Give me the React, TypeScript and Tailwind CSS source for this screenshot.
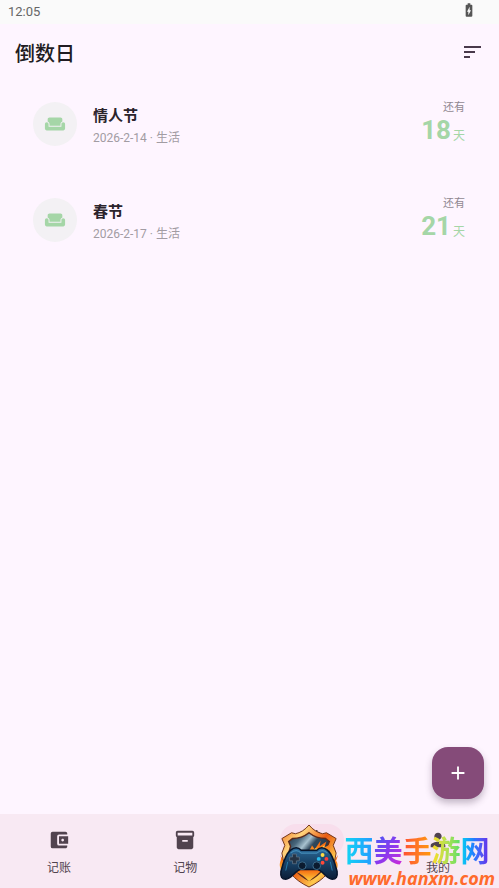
import {
  MdAccountBalanceWallet,
  MdAdd,
  MdBatteryChargingFull,
  MdEvent,
  MdInventory2,
  MdPerson,
  MdWeekend,
} from 'react-icons/md'

type CountdownProps = {
  title: string
  date: string
  category: string
  days: number
}

const countdowns: CountdownProps[] = [
  { title: '情人节', date: '2026-2-14', category: '生活', days: 18 },
  { title: '春节', date: '2026-2-17', category: '生活', days: 21 },
]

const tabs = [
  { label: '记账', icon: MdAccountBalanceWallet, active: false },
  { label: '记物', icon: MdInventory2, active: false },
  { label: '', icon: MdEvent, active: true },
  { label: '我的', icon: MdPerson, active: false },
]

const StatusBar = () => (
  <div className="flex h-6 items-center justify-between bg-[#fafafa] pl-2 pr-[22px] text-[#666666]">
    <span className="text-[13px] leading-4">12:05</span>
    <MdBatteryChargingFull className="mb-1 h-4 w-4 text-[#555555]" />
  </div>
)

const Countdown = ({ title, date, category, days }: CountdownProps) => (
  <li className="flex h-24 items-center justify-between">
    <div className="flex items-center gap-4">
      <div className="flex h-11 w-11 items-center justify-center rounded-full bg-[#f3f1f4]">
        <MdWeekend className="h-[22px] w-[22px] text-[#a5d6a7]" />
      </div>
      <div className="pt-1">
        <h2 className="text-[15px] font-bold leading-6 text-[#2b242c]">{title}</h2>
        <p className="text-[12px] leading-5 text-[#a29ca3]">
          {date} · {category}
        </p>
      </div>
    </div>
    <div className="pb-1 text-right">
      <p className="text-[11px] leading-4 text-[#908891]">还有</p>
      <p className="flex items-end justify-end leading-7 text-[#a5d6a7]">
        <span className="text-[26px] font-bold">{days}</span>
        <span className="ml-0.5 text-[12px] leading-4">天</span>
      </p>
    </div>
  </li>
)

const ShieldLogo = () => (
  <svg viewBox="0 0 64 66" className="h-16 w-[62px] shrink-0" aria-hidden="true">
    <defs>
      <linearGradient id="rim" x1="0" y1="0" x2="1" y2="1">
        <stop offset="0" stopColor="#ef6818" />
        <stop offset="0.25" stopColor="#ffd37c" />
        <stop offset="0.5" stopColor="#e95b12" />
        <stop offset="0.75" stopColor="#ffc94e" />
        <stop offset="1" stopColor="#e84b0c" />
      </linearGradient>
      <linearGradient id="steel" x1="0" y1="0" x2="1" y2="1">
        <stop offset="0" stopColor="#172b3f" />
        <stop offset="0.2" stopColor="#49677c" />
        <stop offset="0.32" stopColor="#a8c2cf" />
        <stop offset="0.42" stopColor="#30485c" />
        <stop offset="1" stopColor="#0d1b2b" />
      </linearGradient>
      <linearGradient id="flame" x1="0" y1="0" x2="0" y2="1">
        <stop offset="0" stopColor="#f45b0b" />
        <stop offset="1" stopColor="#ffd43f" />
      </linearGradient>
      <linearGradient id="pad" x1="0" y1="0" x2="0" y2="1">
        <stop offset="0" stopColor="#2b6a9a" />
        <stop offset="0.45" stopColor="#194469" />
        <stop offset="1" stopColor="#0b1d37" />
      </linearGradient>
    </defs>
    <path d="M2 32C5 36 1 39 2 44C3 50 7 53 12 53L55 52C62 49 63 42 60 38L62 32L54 43L10 43Z" fill="url(#flame)" />
    <path d="M32 1C36 6 41 9 46 10L50 9L60 15L57 22L60 30C58 47 47 58 32 65C17 58 6 47 4 30L7 22L4 15L14 9L18 10C23 9 28 6 32 1Z" fill="url(#rim)" stroke="#6e3218" />
    <path d="M32 9C37 13 43 15 49 15L53 18L51 23L53 30C51 44 43 53 32 58C21 53 13 44 11 30L13 23L11 18L15 15C21 15 27 13 32 9Z" fill="url(#steel)" stroke="#5b291b" strokeWidth="1.5" />
    <path d="M24 31C31 30 34 26 35 22L38 26L44 17L43 23L50 18L48 24L54 21L51 39H24Z" fill="url(#flame)" />
    <path d="M33 30L39 25L42 27L48 22L47 30Z" fill="#ffe16a" />
    <path d="M18 49C23 51 28 55 32 59C37 55 41 52 46 47L39 46H22Z" fill="url(#flame)" />
    <path d="M13 27Q19 22 24 27H40Q45 22 51 27C56 31 59 41 61 49Q62 57 56 57C50 57 46 48 41 47H23C18 48 14 57 8 57Q2 57 3 49C5 41 8 31 13 27Z" fill="url(#pad)" stroke="#07152b" strokeWidth="1.6" />
    <path d="M13 30Q19 25 24 30H40Q46 25 51 30" fill="none" stroke="#438cb8" strokeWidth="1.2" />
    <path d="M15 31h4v3h3v4h-3v3h-4v-3h-3v-4h3Z" fill="#253344" stroke="#66798b" strokeWidth="0.7" />
    <circle cx="25" cy="43" r="4" fill="#0b1b2f" stroke="#3d6d8d" />
    <circle cx="40" cy="43" r="4" fill="#0b1b2f" stroke="#3d6d8d" />
    <circle cx="46" cy="32" r="2" fill="#ffdb45" />
    <circle cx="50" cy="36" r="2" fill="#ff3d39" />
    <circle cx="42" cy="36" r="2" fill="#28bbed" />
    <circle cx="46" cy="40" r="2" fill="#ff4939" />
    <path d="M8 48L10 39M56 48L54 39" stroke="#247fae" strokeWidth="1" />
  </svg>
)

const Watermark = () => (
  <div className="pointer-events-none absolute bottom-0 right-1 flex items-start gap-1">
    <ShieldLogo />
    <div className="flex flex-col pt-3">
      <div className="flex text-[29px] font-bold leading-8">
        <span className="bg-linear-to-r from-[#13d8f2] to-[#2699ff] bg-clip-text text-transparent">西</span>
        <span className="bg-linear-to-br from-[#3454f5] via-[#8b37ee] to-[#d51bd4] bg-clip-text text-transparent">美</span>
        <span className="bg-linear-to-r from-[#ff4b32] to-[#ff9800] bg-clip-text text-transparent">手</span>
        <span className="bg-linear-to-r from-[#ffdc19] to-[#53df66] bg-clip-text text-transparent">游</span>
        <span className="bg-linear-to-r from-[#12d8ee] via-[#2677ff] to-[#6426e8] bg-clip-text text-transparent">网</span>
      </div>
      <span className="pl-1 font-['Open_Sans'] text-[18px] font-bold italic leading-5 text-[#ff6b2c]">www.hanxm.com</span>
    </div>
  </div>
)

const App = () => {
  return (
    <div className="relative flex min-h-screen flex-col bg-[#fef5ff] font-[Roboto,'Noto_Sans_CJK_SC',sans-serif]">
      <StatusBar />

      <header className="flex h-[52px] items-center justify-between pl-[15px] pr-4 pt-1">
        <h1 className="pt-1 text-[20px] font-medium text-[#211c22]">倒数日</h1>
        <button type="button" aria-label="排序" className="text-[#49394b]">
          <svg viewBox="0 0 20 16" className="h-4 w-5" fill="none" stroke="currentColor" strokeWidth="1.8" aria-hidden="true">
            <path d="M1 3h17M1 8h11M1 13h6" />
          </svg>
        </button>
      </header>

      <main className="flex-1">
        <ul className="pl-[33px] pr-[34px]">
          {countdowns.map((item) => (
            <Countdown key={item.date} {...item} />
          ))}
        </ul>
      </main>

      <button
        type="button"
        aria-label="添加"
        className="absolute bottom-[89px] right-[15px] flex h-[52px] w-[52px] items-center justify-center rounded-2xl bg-[#854b79] text-white shadow-[0_4px_7px_rgba(60,40,65,0.3)]"
      >
        <MdAdd className="h-[22px] w-[22px]" />
      </button>

      <nav className="relative flex h-[74px] justify-between bg-[#f8e9f3] pl-[27px] pr-[29px] pt-2.5">
        {tabs.map(({ label, icon: Icon, active }, index) => (
          <a
            key={index}
            href="#"
            aria-label={label || '倒数日'}
            className="flex w-16 flex-col items-center gap-1 text-[#51434e]"
          >
            <span className={active ? 'flex h-8 w-16 items-center justify-center rounded-full bg-[#f8deec]' : 'flex h-8 w-16 items-center justify-center'}>
              <Icon className="h-[22px] w-[22px]" />
            </span>
            <span className="text-[12px] leading-4">{label}</span>
          </a>
        ))}
        <Watermark />
      </nav>
    </div>
  )
}

export default App
